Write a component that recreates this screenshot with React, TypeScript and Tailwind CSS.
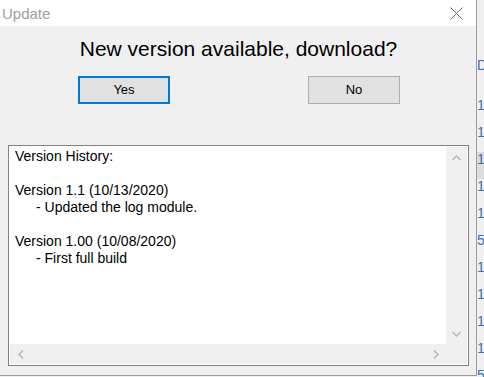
import React from "react";

const Chevron: React.FC<{ dir: "up" | "down" | "left" | "right" }> = ({ dir }) => {
  const pts: Record<string, string> = {
    up: "0.5,5 4.5,1 8.5,5",
    down: "0.5,1 4.5,5 8.5,1",
    left: "5,0.5 1,4.5 5,8.5",
    right: "1,0.5 5,4.5 1,8.5",
  };
  const vertical = dir === "up" || dir === "down";
  return (
    <svg width={vertical ? 9 : 6} height={vertical ? 6 : 9} viewBox={vertical ? "0 0 9 6" : "0 0 6 9"}>
      <polyline points={pts[dir]} fill="none" stroke="#b4b4b4" strokeWidth="1.4" />
    </svg>
  );
};

const history = [
  { text: "Version History:", indent: false },
  { text: "", indent: false },
  { text: "Version 1.1 (10/13/2020)", indent: false },
  { text: "- Updated the log module.", indent: true },
  { text: "", indent: false },
  { text: "Version 1.00 (10/08/2020)", indent: false },
  { text: "- First full build", indent: true },
];

const stripRows = ["D", "10", "10", "10", "10", "10", "5/", "10", "10", "10", "10", "5/"];

export default function App() {
  return (
    <div className="w-[484px] h-[377px] overflow-hidden flex bg-[#f0f0f0] font-['Liberation_Sans',Arial,sans-serif] text-black">
      {/* dialog */}
      <div className="w-[477px] h-[376px] flex flex-col border-r border-b border-[#9c9c9c] shrink-0">
        <div className="h-[26px] bg-white flex items-center justify-between pl-[2px] pr-[13px]">
          <span className="text-[15px] text-[#a0a0a0] leading-none">Update</span>
          <svg width="13" height="13" viewBox="0 0 13 13">
            <path d="M0.5 0.5 L12.5 12.5 M12.5 0.5 L0.5 12.5" stroke="#707070" strokeWidth="1" />
          </svg>
        </div>

        <div className="flex-1 flex flex-col bg-[#f0f0f0] pt-[11px]">
          <h1 className="text-[21px] leading-[24px] text-center pl-[1px]">New version available, download?</h1>

          <div className="flex mt-[15px] pl-[78px]">
            <button className="w-[92px] h-[28px] bg-[#e1e1e1] border-2 border-[#0078d7] text-[13px]">Yes</button>
            <button className="w-[92px] h-[28px] ml-[138px] bg-[#e1e1e1] border border-[#adadad] text-[13px]">No</button>
          </div>

          <div className="mt-[41px] ml-[8px] w-[461px] h-[221px] border border-[#828282] bg-white p-[1px]">
            <div className="w-full h-full grid grid-cols-[1fr_21px] grid-rows-[1fr_20px]">
              <div className="bg-white pl-[5px] pt-[1px] text-[14px] leading-[17px]">
                {history.map((line, i) => (
                  <div key={i} className={`h-[17px] whitespace-pre ${line.indent ? "pl-[21px]" : ""}`}>
                    {line.text}
                  </div>
                ))}
              </div>
              <div className="bg-[#f0f0f0] flex flex-col justify-between">
                <div className="h-[21px] flex items-center justify-center">
                  <Chevron dir="up" />
                </div>
                <div className="h-[21px] flex items-center justify-center">
                  <Chevron dir="down" />
                </div>
              </div>
              <div className="bg-[#f0f0f0] flex justify-between">
                <div className="w-[21px] flex items-center justify-center">
                  <Chevron dir="left" />
                </div>
                <div className="w-[21px] flex items-center justify-center">
                  <Chevron dir="right" />
                </div>
              </div>
              <div className="bg-[#f0f0f0]" />
            </div>
          </div>
        </div>
      </div>

      {/* window behind, peeking out on the right */}
      <div className="w-[7px] shrink-0 overflow-hidden bg-[#f0f0f0] pt-[58px]">
        {stripRows.map((r, i) => (
          <div
            key={i}
            className={`text-[14px] leading-[14px] text-[#3b6fb6] whitespace-nowrap ${i === 0 ? "h-[40px]" : "h-[27px]"} ${i === 3 ? "bg-[#dcdcdc]" : ""}`}
          >
            {r}
          </div>
        ))}
      </div>
    </div>
  );
}
